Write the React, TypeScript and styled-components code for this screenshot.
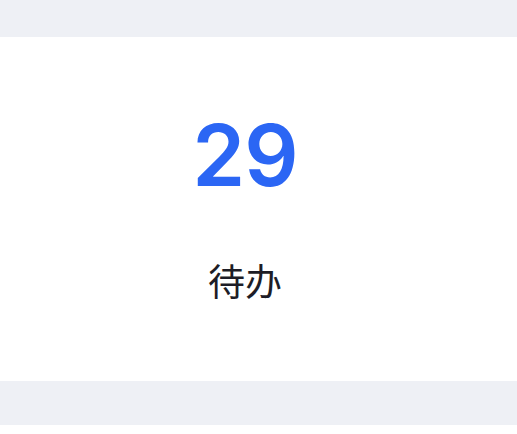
import React from "react";
import styled, { createGlobalStyle } from "styled-components";

const GlobalStyle = createGlobalStyle`
  html, body {
    margin: 0;
    padding: 0;
    background: #ffffff;
  }
  body {
    font-family: Inter, "Noto Sans CJK SC", sans-serif;
  }
`;

const Page = styled.div`
  height: 425px;
  background: #eef0f5;
  display: flex;
  flex-direction: column;
  padding-top: 37px;
  box-sizing: border-box;
`;

const StatCard = styled.div`
  height: 344px;
  background: #ffffff;
  display: flex;
  flex-direction: column;
  align-items: center;
  justify-content: center;
  padding-right: 27px;
  padding-bottom: 6px;
  box-sizing: border-box;
`;

const Value = styled.div`
  font-family: Inter, sans-serif;
  font-size: 85px;
  font-weight: 600;
  line-height: 1;
  color: #2b66f4;
  letter-spacing: -1px;
`;

const Label = styled.div`
  margin-top: 64px;
  font-family: "Noto Sans CJK SC", sans-serif;
  font-size: 37px;
  font-weight: 400;
  line-height: 1;
  color: #1d1d26;
`;

export default function App() {
  return (
    <>
      <GlobalStyle />
      <Page>
        <StatCard>
          <Value>29</Value>
          <Label>待办</Label>
        </StatCard>
      </Page>
    </>
  );
}
